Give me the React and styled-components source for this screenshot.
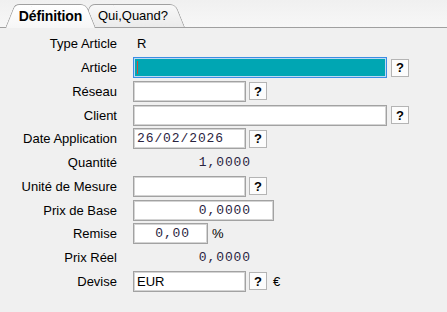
import React from "react";
import styled, { createGlobalStyle } from "styled-components";

// Global
const GlobalStyle = createGlobalStyle`
  html, body {
    margin: 0;
    padding: 0;
    background: #f0f0f0;
  }
  body {
    font-family: "Liberation Sans", Arial, sans-serif;
    font-size: 13px;
    color: #000;
  }
`;

const Window = styled.div`
  width: 447px;
  height: 312px;
  background: #f0f0f0;
  overflow: hidden;
`;

const TabBar = styled.div`
  display: flex;
  align-items: flex-end;
  height: 27px;
  padding-left: 5px;
  border-bottom: 1px solid #a0a0a0;
  background: linear-gradient(#f0f0f0, #f7f7f7);
`;

const Tab = styled.div`
  position: relative;
  z-index: ${p => (p.$active ? 2 : 1)};
  display: flex;
  align-items: center;
  justify-content: center;
  width: ${p => p.$width}px;
  height: 24px;
  margin-bottom: -1px;
  margin-left: ${p => p.$overlap || 0}px;
  padding-bottom: 1px;
  box-sizing: border-box;
  font-size: ${p => (p.$active ? "14px" : "13px")};
  font-weight: ${p => (p.$active ? 700 : 400)};
  letter-spacing: ${p => (p.$active ? "-0.1px" : "0")};

  &::before,
  &::after {
    content: "";
    position: absolute;
    top: 0;
    bottom: ${p => (p.$active ? "0" : "1px")};
    width: 60%;
    z-index: -1;
    border: 1px solid #a0a0a0;
    border-bottom: none;
    background: ${p =>
      p.$active
        ? "linear-gradient(#ffffff, #f6f6f6)"
        : "linear-gradient(#f8f8f8, #ebebeb)"};
  }

  &::before {
    left: 0;
    border-right: none;
    border-radius: 5px 0 0 0;
    transform-origin: bottom left;
    transform: skewX(-22deg);
  }

  &::after {
    right: 0;
    border-left: none;
    border-radius: 0 6px 0 0;
    transform-origin: bottom right;
    transform: skewX(22deg);
  }
`;

const Form = styled.div`
  display: grid;
  grid-template-columns: 117px 1fr;
  grid-auto-rows: 21px;
  column-gap: 16px;
  row-gap: 2.75px;
  padding-top: 5.25px;
`;

const Label = styled.div`
  display: flex;
  align-items: center;
  justify-content: flex-end;
  white-space: nowrap;
`;

const Field = styled.div`
  display: flex;
  align-items: center;
`;

const Box = styled.div`
  position: relative;
  display: flex;
  align-items: center;
  justify-content: ${p => (p.$right ? "flex-end" : "flex-start")};
  width: ${p => p.$w}px;
  height: 21px;
  box-sizing: border-box;
  padding: ${p => (p.$right ? `0 ${p.$pr}px 0 0` : "0 0 0 3px")};
  background: ${p => (p.$focus ? "#00a6b3" : "#fff")};
  border: 1px solid ${p => (p.$focus ? "#3a8de4" : "#a2a2a2")};
  box-shadow: inset 0 0 0 1px ${p => (p.$focus ? "#bcd9f4" : "#d4d4d4")};
  white-space: nowrap;
`;

const Caret = styled.span`
  position: absolute;
  left: 3px;
  top: 3px;
  bottom: 3px;
  width: 1px;
  background: #c4503f;
`;

const Mono = styled.span`
  font-family: "Liberation Mono", "Courier New", monospace;
  font-size: 13px;
  letter-spacing: 0.9px;
  color: #2a2440;
`;

const Static = styled.div`
  display: flex;
  align-items: center;
  justify-content: ${p => (p.$right ? "flex-end" : "flex-start")};
  width: ${p => p.$w || 118}px;
  padding-left: ${p => (p.$right ? 0 : 4)}px;
  box-sizing: border-box;
`;

const HelpButton = styled.div`
  display: flex;
  align-items: center;
  justify-content: center;
  width: 18px;
  height: 18px;
  margin-left: ${p => p.$gap || 3}px;
  box-sizing: border-box;
  border: 1px solid #b4b4b4;
  background: #fcfcfc;
  font-family: "Liberation Sans", Arial, sans-serif;
  font-weight: 700;
  font-size: 13px;
  line-height: 1;
  color: #000;
`;

const Unit = styled.span`
  margin-left: ${p => p.$gap}px;
  font-size: 13px;
`;

const App = () => {
  return (
    <Window>
      <GlobalStyle />
      <TabBar>
        <Tab $active $width={91}>
          Définition
        </Tab>
        <Tab $width={104} $overlap={-15}>
          Qui,Quand?
        </Tab>
      </TabBar>

      <Form>
        <Label>Type Article</Label>
        <Field>
          <Static>R</Static>
        </Field>

        <Label>Article</Label>
        <Field>
          <Box $w={254} $focus>
            <Caret />
          </Box>
          <HelpButton $gap={4}>?</HelpButton>
        </Field>

        <Label>Réseau</Label>
        <Field>
          <Box $w={113} />
          <HelpButton>?</HelpButton>
        </Field>

        <Label>Client</Label>
        <Field>
          <Box $w={254} />
          <HelpButton $gap={4}>?</HelpButton>
        </Field>

        <Label>Date Application</Label>
        <Field>
          <Box $w={113}>
            <Mono>26/02/2026</Mono>
          </Box>
          <HelpButton>?</HelpButton>
        </Field>

        <Label>Quantité</Label>
        <Field>
          <Static $right>
            <Mono>1,0000</Mono>
          </Static>
        </Field>

        <Label>Unité de Mesure</Label>
        <Field>
          <Box $w={113} />
          <HelpButton>?</HelpButton>
        </Field>

        <Label>Prix de Base</Label>
        <Field>
          <Box $w={141} $right $pr={22}>
            <Mono>0,0000</Mono>
          </Box>
        </Field>

        <Label>Remise</Label>
        <Field>
          <Box $w={75} $right $pr={17}>
            <Mono>0,00</Mono>
          </Box>
          <Unit $gap={4}>%</Unit>
        </Field>

        <Label>Prix Réel</Label>
        <Field>
          <Static $right>
            <Mono>0,0000</Mono>
          </Static>
        </Field>

        <Label>Devise</Label>
        <Field>
          <Box $w={113}>EUR</Box>
          <HelpButton>?</HelpButton>
          <Unit $gap={6}>€</Unit>
        </Field>
      </Form>
    </Window>
  );
};

export default App;
